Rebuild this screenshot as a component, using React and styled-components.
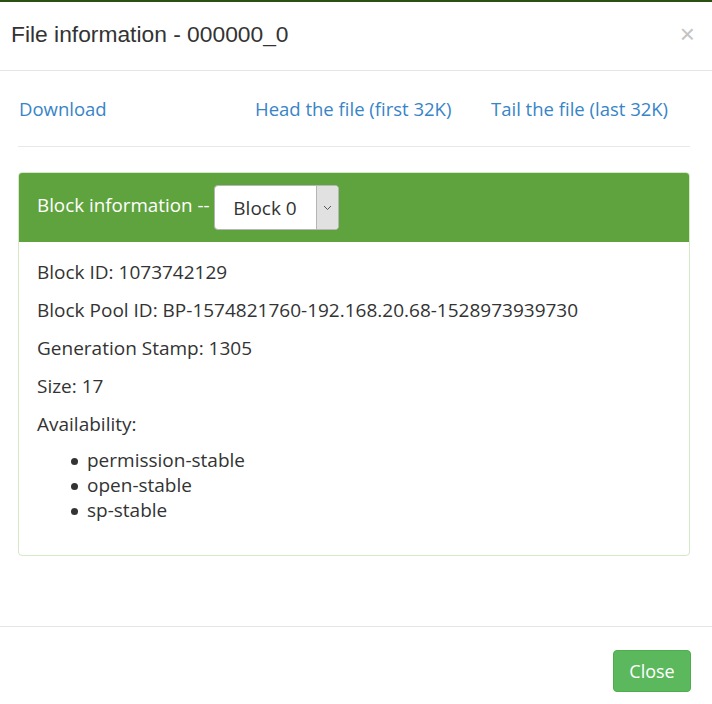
import React from 'react'
import styled, { createGlobalStyle } from 'styled-components'

const GlobalStyle = createGlobalStyle`
  html, body {
    margin: 0;
    padding: 0;
    background: #fff;
  }
  body {
    font-family: "Open Sans", "Noto Sans", sans-serif;
    color: #333;
  }
`;

const TopStrip = styled.div`
  height: 2px;
  background: #2c4f14;
`;

const Modal = styled.div`
  width: 712px;
  height: 702px;
  display: flex;
  flex-direction: column;
  background: #fff;
`;

const Header = styled.div`
  height: 68px;
  border-bottom: 1px solid #e5e5e5;
  display: flex;
  align-items: center;
  justify-content: space-between;
  padding: 0 17px 0 11px;
`;

const Title = styled.h4`
  margin: -3px 0 0;
  font-family: "Liberation Sans", Arial, sans-serif;
  font-weight: normal;
  font-size: 22.8px;
  color: #333;
`;

const CloseX = styled.span`
  font-family: "Liberation Sans", Arial, sans-serif;
  font-size: 26px;
  color: #c4c4c4;
  line-height: 1;
  margin-top: -4px;
`;

const Body = styled.div`
  flex: 1;
  padding: 0 22px 0 18px;
`;

const LinkRow = styled.div`
  display: grid;
  grid-template-columns: 236px 236px 1fr;
  padding: 24px 0 0 1px;
  height: 51px;
  border-bottom: 1px solid #e8e8e8;
  font-size: 18.5px;
`;

const Link = styled.a`
  color: #3784c8;
  text-decoration: none;
  white-space: nowrap;
  line-height: 28px;
`;

const Panel = styled.div`
  margin-top: 25px;
  border: 1px solid #d6e9c6;
  border-radius: 4px;
  overflow: hidden;
`;

const PanelHeading = styled.div`
  background: #5fa33e;
  height: 69px;
  display: flex;
  align-items: center;
  padding: 0 18px;
  color: #fff;
  font-size: 18.8px;
`;

const HeadingLabel = styled.span`
  margin-top: -5px;
`;

const Select = styled.div`
  display: flex;
  margin-left: 4px;
  height: 43px;
  border: 1px solid #b5b5b5;
  border-radius: 4px;
  background: #fff;
  overflow: hidden;
`;

const SelectValue = styled.div`
  width: 101px;
  display: flex;
  align-items: center;
  justify-content: center;
  color: #333;
  font-size: 19px;
`;

const SelectArrow = styled.div`
  width: 21px;
  background: #e1e1e1;
  border-left: 1px solid #b5b5b5;
  display: flex;
  align-items: center;
  justify-content: center;
`;

const PanelBody = styled.div`
  padding: 16px 18px 32px;
  font-size: 19px;
`;

const Line = styled.p`
  margin: 0 0 10px;
  line-height: 28px;
`;

const List = styled.ul`
  margin: 0;
  padding-left: 50px;
  list-style: none;
`;

const Item = styled.li`
  line-height: 25px;
  position: relative;
  &::before {
    content: '';
    position: absolute;
    left: -16px;
    top: 10px;
    width: 7px;
    height: 7px;
    border-radius: 50%;
    background: #333;
  }
`;

const Footer = styled.div`
  height: 77px;
  border-top: 1px solid #e5e5e5;
  display: flex;
  align-items: center;
  justify-content: flex-end;
  padding: 0 21px 0 0;
`;

const Button = styled.button`
  background: #5cb85c;
  border: 1px solid #4cae4c;
  border-radius: 4px;
  color: #fff;
  font-family: "Open Sans", "Noto Sans", sans-serif;
  font-size: 18px;
  width: 78px;
  height: 42px;
  margin-top: 11px;
  padding: 0;
`;

export default function App() {
  const availability = ['permission-stable', 'open-stable', 'sp-stable']
  return (
    <>
      <GlobalStyle />
      <TopStrip />
      <Modal>
        <Header>
          <Title>File information - 000000_0</Title>
          <CloseX>×</CloseX>
        </Header>
        <Body>
          <LinkRow>
            <Link href="#">Download</Link>
            <Link href="#">Head the file (first 32K)</Link>
            <Link href="#">Tail the file (last 32K)</Link>
          </LinkRow>
          <Panel>
            <PanelHeading>
              <HeadingLabel>Block information --</HeadingLabel>
              <Select>
                <SelectValue>Block 0</SelectValue>
                <SelectArrow>
                  <svg width="9" height="6" viewBox="0 0 9 6">
                    <path d="M1 1 L4.5 4.5 L8 1" stroke="#555" strokeWidth="1" fill="none" />
                  </svg>
                </SelectArrow>
              </Select>
            </PanelHeading>
            <PanelBody>
              <Line>Block ID: 1073742129</Line>
              <Line>Block Pool ID: BP-1574821760-192.168.20.68-1528973939730</Line>
              <Line>Generation Stamp: 1305</Line>
              <Line>Size: 17</Line>
              <Line>Availability:</Line>
              <List>
                {availability.map(a => <Item key={a}>{a}</Item>)}
              </List>
            </PanelBody>
          </Panel>
        </Body>
        <Footer>
          <Button>Close</Button>
        </Footer>
      </Modal>
    </>
  )
}
